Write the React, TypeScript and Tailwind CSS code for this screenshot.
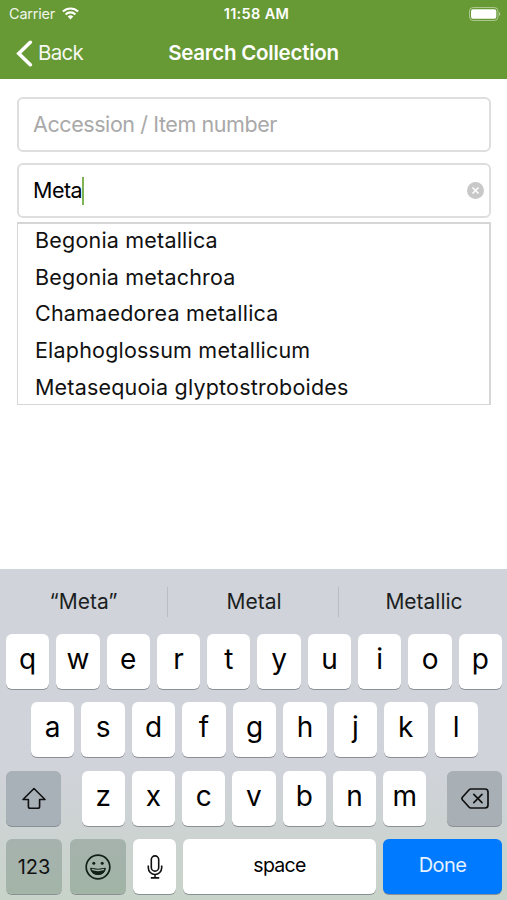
import type { ReactNode } from 'react';

const RESULTS = [
  'Begonia metallica',
  'Begonia metachroa',
  'Chamaedorea metallica',
  'Elaphoglossum metallicum',
  'Metasequoia glyptostroboides',
];

const ROW_TOP = ['q', 'w', 'e', 'r', 't', 'y', 'u', 'i', 'o', 'p'];
const ROW_HOME = ['a', 's', 'd', 'f', 'g', 'h', 'j', 'k', 'l'];
const ROW_BOTTOM = ['z', 'x', 'c', 'v', 'b', 'n', 'm'];

const LetterKey = ({ label }: { label: string }) => (
  <button className="flex h-[55px] min-w-0 flex-1 justify-center rounded-[6px] bg-white pt-[7px] text-[28px] leading-[36px] text-black shadow-[0_1px_0_#8d9096]">
    {label}
  </button>
);

const ActionKey = ({ className, children }: { className: string; children: ReactNode }) => (
  <button
    className={`flex h-[55px] shrink-0 items-center justify-center rounded-[6px] shadow-[0_1px_0_#8a9093] ${className}`}
  >
    {children}
  </button>
);

const StatusBar = () => (
  <div className="grid h-[27px] grid-cols-[1fr_auto_1fr] items-center pr-[6px] pl-[9px]">
    <div className="flex items-center gap-[7px]">
      <span className="text-[14.5px] tracking-[-0.2px] text-white/90">Carrier</span>
      <svg width="17" height="13" viewBox="0 0 17 13" fill="none" stroke="white" strokeWidth="2.1">
        <path d="M.9 4.6a10.8 10.8 0 0 1 15.2 0" />
        <path d="M3.6 7.4a7 7 0 0 1 9.8 0" />
        <path d="M5.7 9.6a4 4 0 0 1 5.6 0L8.5 12.5Z" fill="white" stroke="none" />
      </svg>
    </div>
    <span className="pl-[3px] text-center text-[14.5px] font-semibold tracking-[0.35px] text-white">11:58 AM</span>
    <svg className="justify-self-end" width="32" height="14" viewBox="0 0 32 14">
      <rect x=".5" y=".5" width="28.5" height="13" rx="3.6" fill="none" stroke="white" strokeOpacity=".45" />
      <rect x="2" y="2.3" width="25.3" height="9.4" rx="2" fill="white" />
      <path d="M30.2 5v4a2.4 2.4 0 0 0 0-4Z" fill="white" fillOpacity=".6" />
    </svg>
  </div>
);

const NavBar = () => (
  <div className="grid h-[52px] grid-cols-[1fr_auto_1fr] items-center px-[16px]">
    <button className="flex items-center gap-[5px] text-[20.5px] tracking-[-0.7px] text-white/95">
      <svg width="17" height="27" viewBox="0 0 17 27" fill="none" stroke="white" strokeWidth="3.6" strokeLinecap="round">
        <path d="M14.3 2.3 2.8 13.5 14.3 24.7" />
      </svg>
      Back
    </button>
    <h1 className="text-[20.5px] font-semibold tracking-[-0.24px] text-white">Search Collection</h1>
    <span />
  </div>
);

const SearchForm = () => (
  <main className="flex h-[490px] flex-col pt-[18px] pr-[16px] pl-[17px]">
    <div className="flex h-[55px] items-center rounded-[6px] border-2 border-[#dedede] px-[14px] text-[21.5px] tracking-[-0.42px] text-[#a9a9a9]">
      Accession / Item number
    </div>
    <div className="mt-[11px] flex h-[55px] items-center rounded-[6px] border-2 border-[#dedede] pr-[5px] pl-[14px] text-[21.5px] text-black">
      <span className="tracking-[-0.5px]">Meta</span>
      <span className="h-[28px] w-[2px] bg-[#7fb355]" />
      <svg className="ml-auto" width="17" height="17" viewBox="0 0 17 17">
        <circle cx="8.5" cy="8.5" r="8.5" fill="#c8c8c8" />
        <path d="m5.5 5.5 6 6m0-6-6 6" stroke="white" strokeWidth="1.5" />
      </svg>
    </div>
    <ul className="mt-[4px] h-[183px] border border-t-2 border-r-2 border-[#d6d6d6] pl-[17px]">
      {RESULTS.map((name) => (
        <li key={name} className="h-[36.7px] text-[21.5px] leading-[32px] tracking-[0.2px] text-[#111]">
          {name}
        </li>
      ))}
    </ul>
  </main>
);

const Suggestions = () => (
  <div className="grid h-[65px] grid-cols-[167px_172px_168px] items-center text-center text-[21px] text-[#1c1f22]">
    <span>“Meta”</span>
    <span className="border-x border-[#b9bcc3] pl-[2px] leading-[30px]">Metal</span>
    <span className="pl-[2px]">Metallic</span>
  </div>
);

const Keyboard = () => (
  <section className="h-[331px] bg-linear-to-b from-[#d0d3da] from-60% to-[#c8d3c9]">
    <Suggestions />
    <div className="flex flex-col gap-[13.4px] pr-[5px] pl-[6px]">
      <div className="flex gap-[7px]">
        {ROW_TOP.map((letter) => (
          <LetterKey key={letter} label={letter} />
        ))}
      </div>
      <div className="flex gap-[7px] pr-[24px] pl-[25px]">
        {ROW_HOME.map((letter) => (
          <LetterKey key={letter} label={letter} />
        ))}
      </div>
      <div className="flex justify-between">
        <ActionKey className="w-[55px] bg-[#a8b0b8]">
          <svg width="26" height="23" viewBox="0 0 26 23" fill="none" stroke="#111" strokeWidth="1.6" strokeLinejoin="round">
            <path d="M13 1.5 24 12.5H18.6V19.5Q18.6 21.3 16.8 21.3H9.2Q7.4 21.3 7.4 19.5V12.5H2Z" />
          </svg>
        </ActionKey>
        <div className="flex w-[345px] gap-[7px]">
          {ROW_BOTTOM.map((letter) => (
            <LetterKey key={letter} label={letter} />
          ))}
        </div>
        <ActionKey className="w-[55px] bg-[#a8b0b5]">
          <svg width="28" height="21" viewBox="0 0 28 21" fill="none" stroke="#111" strokeWidth="1.7" strokeLinejoin="round" strokeLinecap="round">
            <path d="M10 1H24Q27 1 27 4V17Q27 20 24 20H10Q8.8 20 7.9 19L1.4 11.7Q.5 10.5 1.4 9.3L7.9 2Q8.8 1 10 1Z" />
            <path d="m12.8 6.4 8.2 8.2m0-8.2-8.2 8.2" />
          </svg>
        </ActionKey>
      </div>
      <div className="flex gap-[7px]">
        <ActionKey className="mr-[1px] w-[56px] bg-linear-to-b from-[#a6b2af] to-[#a3b5a7] text-[20px] text-[#111]">
          123
        </ActionKey>
        <ActionKey className="w-[56px] bg-linear-to-b from-[#a5b2ad] to-[#a1b4a5]">
          <svg width="26" height="26" viewBox="0 0 26 26" fill="none" stroke="#102016" strokeWidth="1.7">
            <circle cx="13" cy="13" r="11.8" />
            <circle cx="8.8" cy="9.2" r="1.5" fill="#102016" stroke="none" />
            <circle cx="17.2" cy="9.2" r="1.5" fill="#102016" stroke="none" />
            <path d="M5.6 14.2Q13 16.4 20.4 14.2Q19.6 20.6 13 20.6T5.6 14.2Z" fill="#102016" strokeWidth="1" />
            <path d="M7 15.4Q13 17.4 19 15.4" stroke="#a3b4aa" strokeWidth="1.5" />
          </svg>
        </ActionKey>
        <ActionKey className="w-[43px] bg-white">
          <svg width="16" height="24" viewBox="0 0 16 24" fill="none" stroke="#111" strokeWidth="1.6">
            <rect x="4.3" y=".9" width="7.4" height="15.2" rx="3.7" />
            <path d="M1.3 10.5v2.3a6.7 6.7 0 0 0 13.4 0v-2.3M8 19.5v3.4M3.8 22.9h8.4" />
          </svg>
        </ActionKey>
        <ActionKey className="w-[193px] bg-white pb-[3px] text-[19.5px] tracking-[-0.7px] text-black">space</ActionKey>
        <ActionKey className="w-[119px] bg-[#007aff] pb-[3px] text-[20px] tracking-[-0.6px] text-white/90">
          Done
        </ActionKey>
      </div>
    </div>
  </section>
);

const App = () => {
  return (
    <div className="flex h-[900px] w-[507px] flex-col overflow-hidden bg-white font-['Inter',sans-serif]">
      <header className="h-[79px] bg-[#679934]">
        <StatusBar />
        <NavBar />
      </header>
      <SearchForm />
      <Keyboard />
    </div>
  );
};

export default App;
